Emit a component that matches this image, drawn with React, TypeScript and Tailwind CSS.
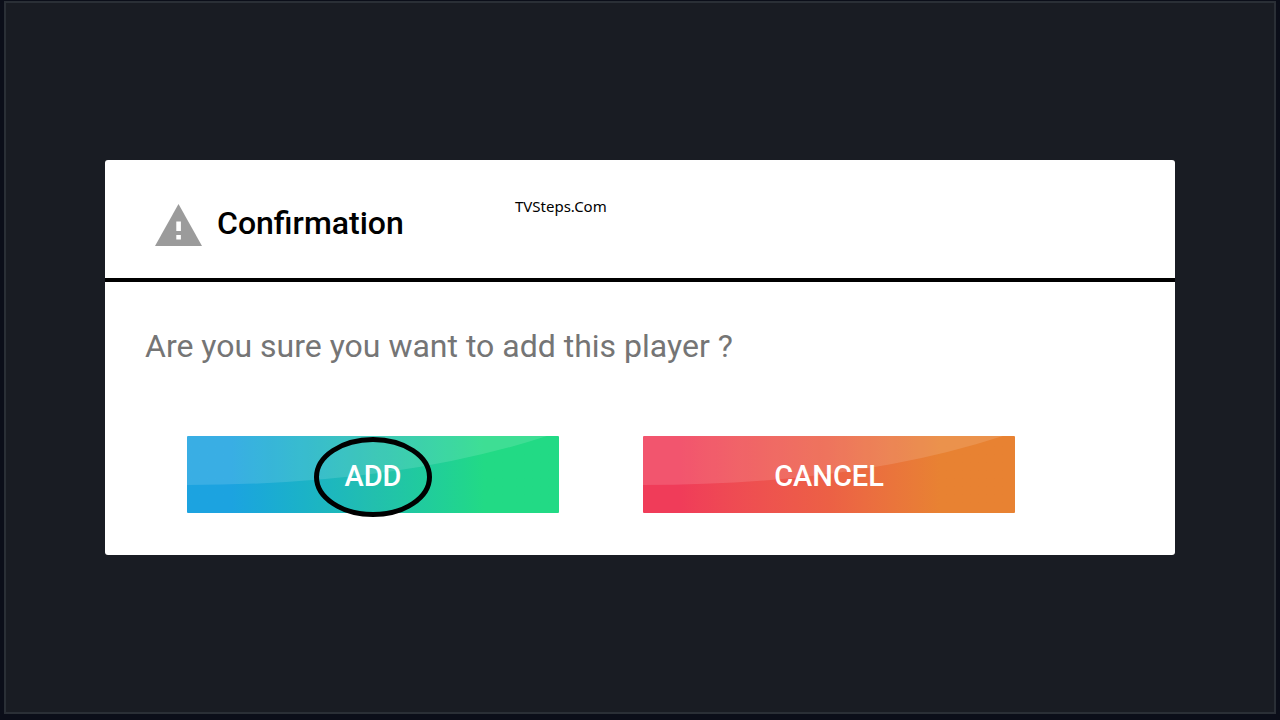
import type { ReactNode } from "react";

function WarningIcon() {
  return (
    <svg className="h-[42px] w-[47px] shrink-0" viewBox="0 0 47 42" aria-hidden="true">
      <path d="M23.5 0 47 42H0Z" fill="#9b9b9b" />
      <path d="M21.3 17.5h4.6v9.5h-4.6zM21.3 31h4.6v4.5h-4.6z" fill="#fff" />
    </svg>
  );
}

function GlossyButton({ className, children }: { className: string; children: ReactNode }) {
  return (
    <button
      type="button"
      className={`relative flex h-[77px] items-center justify-center rounded-[1px] pt-0.5 text-[29px] leading-[34px] font-medium text-white ${className}`}
    >
      <svg
        className="absolute inset-0 h-full w-full"
        viewBox="0 0 372 77"
        preserveAspectRatio="none"
        aria-hidden="true"
      >
        <path d="M0 0H360Q210 49 0 49Z" fill="#fff" fillOpacity="0.13" />
      </svg>
      <span className="relative">{children}</span>
    </button>
  );
}

export default function App() {
  return (
    <div className="flex min-h-screen flex-col bg-[#0b0e19] px-1 pt-px pb-1.5 font-['Roboto',sans-serif]">
      <main className="flex-1 border-2 border-[#2a2f36] bg-[#191c23] px-[99px] pt-[157px]">
        <section
          role="dialog"
          aria-labelledby="dialog-title"
          aria-describedby="dialog-message"
          className="relative rounded-[3px] bg-white pb-[42px]"
        >
          <header className="flex h-[122px] items-center gap-[15px] border-b-4 border-black px-[50px] pt-2">
            <div className="pt-1">
              <WarningIcon />
            </div>
            <h1 id="dialog-title" className="text-[32px] leading-10 font-medium text-black">
              Confirmation
            </h1>
          </header>
          <span className="absolute top-9 left-[410px] font-['Noto_Sans',sans-serif] text-[15px] leading-5 text-black">
            TVSteps.Com
          </span>
          <p id="dialog-message" className="px-10 pt-11 text-[32px] leading-10 text-[#757575]">
            Are you sure you want to add this player ?
          </p>
          <div className="grid grid-cols-2 gap-[84px] pt-[70px] pr-[160px] pl-[82px]">
            <div className="relative grid">
              <GlossyButton className="bg-linear-to-r from-[#1ca3e0] from-12% via-[#22bfae] via-50% to-[#22da85] to-80%">
                ADD
              </GlossyButton>
              <svg
                className="pointer-events-none absolute top-px left-1/2 h-20 w-[118px] -translate-x-1/2"
                viewBox="0 0 118 80"
                aria-hidden="true"
              >
                <ellipse cx="59" cy="40" rx="56.5" ry="37.5" fill="none" stroke="#000" strokeWidth="5" />
              </svg>
            </div>
            <GlossyButton className="bg-linear-to-r from-[#f03c59] from-10% via-[#ec6045] via-50% to-[#e88232] to-80%">
              CANCEL
            </GlossyButton>
          </div>
        </section>
      </main>
    </div>
  );
}
